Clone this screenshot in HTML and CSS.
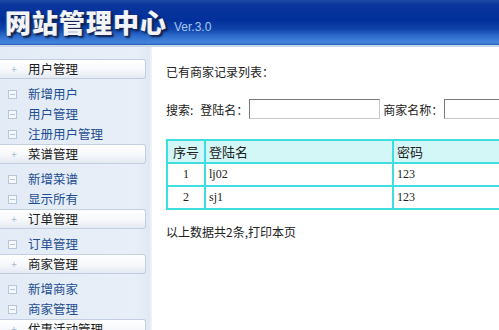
FILE: index.html
```html
<!DOCTYPE html>
<html lang="zh-CN">
<head>
  <meta charset="UTF-8" />
  <title>网站管理中心</title>
  <link rel="stylesheet" href="styles.css">
</head>
<body>
  <div class="top">
    <span class="logo">网站管理中心</span>
    <span class="ver">Ver.3.0</span>
  </div>
  <div class="layout">
    <div class="side">
      <div class="menu-title"><span class="plus">+</span>用户管理</div>
      <ul class="menu-list">
        <li><span class="ico"></span>新增用户</li>
        <li><span class="ico"></span>用户管理</li>
        <li><span class="ico"></span>注册用户管理</li>
      </ul>
      <div class="menu-title"><span class="plus">+</span>菜谱管理</div>
      <ul class="menu-list">
        <li><span class="ico"></span>新增菜谱</li>
        <li><span class="ico"></span>显示所有</li>
      </ul>
      <div class="menu-title"><span class="plus">+</span>订单管理</div>
      <ul class="menu-list">
        <li><span class="ico"></span>订单管理</li>
      </ul>
      <div class="menu-title"><span class="plus">+</span>商家管理</div>
      <ul class="menu-list">
        <li><span class="ico"></span>新增商家</li>
        <li><span class="ico"></span>商家管理</li>
      </ul>
      <div class="menu-title"><span class="plus">+</span>优惠活动管理</div>
    </div>
    <div class="main">
      <p class="caption">已有商家记录列表：</p>
      <div class="search">
        <span class="label first">搜索:</span>
        <span class="label">登陆名：</span>
        <input type="text" class="field" />
        <span class="label">商家名称：</span>
        <input type="text" class="field" />
      </div>
      <table class="list">
        <tr class="head">
          <td class="num">序号</td>
          <td class="name">登陆名</td>
          <td>密码</td>
        </tr>
        <tr>
          <td class="num">1</td>
          <td class="name">lj02</td>
          <td>123</td>
        </tr>
        <tr>
          <td class="num">2</td>
          <td class="name">sj1</td>
          <td>123</td>
        </tr>
      </table>
      <p class="foot">以上数据共2条,打印本页</p>
    </div>
  </div>
</body>
</html>
```

FILE: styles.css
```css
body {
  margin: 0;
  font-family: "Noto Sans CJK SC", "Noto Sans", sans-serif;
  font-size: 12px;
  color: #222;
  background: #fff;
  overflow: hidden;
  width: 499px;
  height: 330px;
}

.top {
  height: 45px;
  border-bottom: 2px solid #c9d6e8;
  background: linear-gradient(to bottom, #1b4aa6 0%, #0a359c 12%, #02309a 45%, #0f44ab 65%, #2e6ccb 80%, #4585dc 95%, #2c5fb8 100%);
  display: flex;
  align-items: flex-end;
  padding-left: 5px;
  white-space: nowrap;
}

.logo {
  font-size: 26px;
  font-weight: 900;
  color: #f2f4f8;
  letter-spacing: 1px;
  line-height: 30px;
  margin-bottom: 8px;
  text-shadow: 1px 1px 0 #1a2a5a, -1px 0 0 #3a5aa0, 2px 2px 2px #0a1a40;
}

.ver {
  font-family: "Liberation Sans", Arial, sans-serif;
  font-size: 12px;
  color: #a9c6ee;
  margin-left: 7px;
  margin-bottom: 11px;
}

.layout {
  display: flex;
}

.side {
  width: 150px;
  flex-shrink: 0;
  background: linear-gradient(to right, #e3ebf6 0%, #e8eff8 90%, #dfe8f4 100%);
  padding-top: 12px;
  height: 271px;
  border-right: 2px solid #edf2f9;
}

.menu-title {
  width: 146px;
  height: 20px;
  line-height: 20px;
  box-sizing: border-box;
  border: 1px solid #c3cfe0;
  border-left: none;
  border-radius: 0 3px 3px 0;
  background: linear-gradient(to bottom, #ffffff 0%, #f6f8fb 55%, #e4eaf2 100%);
  font-size: 12.5px;
  color: #1a1a1a;
  display: flex;
  align-items: center;
}

.plus {
  width: 28px;
  text-align: center;
  font-size: 10px;
  color: #a8b8cc;
}

.menu-list {
  list-style: none;
  margin: 0;
  padding: 5px 0 0 0;
}

.menu-list li {
  height: 20px;
  line-height: 20px;
  display: flex;
  align-items: center;
  color: #1f4f91;
  font-size: 12.5px;
}

.ico {
  width: 7px;
  height: 7px;
  border: 1px solid #b9c6d8;
  margin: 0 11px 0 8px;
  position: relative;
  background: #f4f7fb;
}

.ico::after {
  content: "";
  position: absolute;
  left: 1px;
  right: 1px;
  top: 3px;
  height: 1px;
  background: #b9c6d8;
}

.main {
  flex: 1;
  padding: 16px 0 0 14px;
  min-width: 0;
  overflow: hidden;
}

.caption {
  margin: 0;
  line-height: 18px;
  font-size: 12px;
}

.search {
  display: flex;
  align-items: center;
  margin-top: 18px;
  white-space: nowrap;
}

.label {
  flex-shrink: 0;
}

.label.first {
  margin-right: 7px;
}

.field {
  width: 131px;
  height: 20px;
  box-sizing: border-box;
  border: 1px solid #7a7a7a;
  border-right-color: #c8c8c8;
  border-bottom-color: #c8c8c8;
  margin: 0 3px 0 1px;
  padding: 0;
  flex-shrink: 0;
}

.list {
  margin-top: 20px;
  width: 420px;
  border-collapse: collapse;
  border: 2px solid #3fdede;
}

.list td {
  border: 2px solid #3fdede;
  height: 21px;
  padding: 0 3px;
  font-family: "Liberation Serif", "Noto Sans CJK SC", serif;
  font-size: 12px;
}

.list .head td {
  background: #d3f6f6;
  font-family: "Noto Sans CJK SC", sans-serif;
  font-size: 13px;
}

.list .num {
  width: 30px;
  text-align: center;
}

.list .name {
  width: 180px;
}

.foot {
  margin: 13px 0 0 0;
  font-size: 12px;
}
```
